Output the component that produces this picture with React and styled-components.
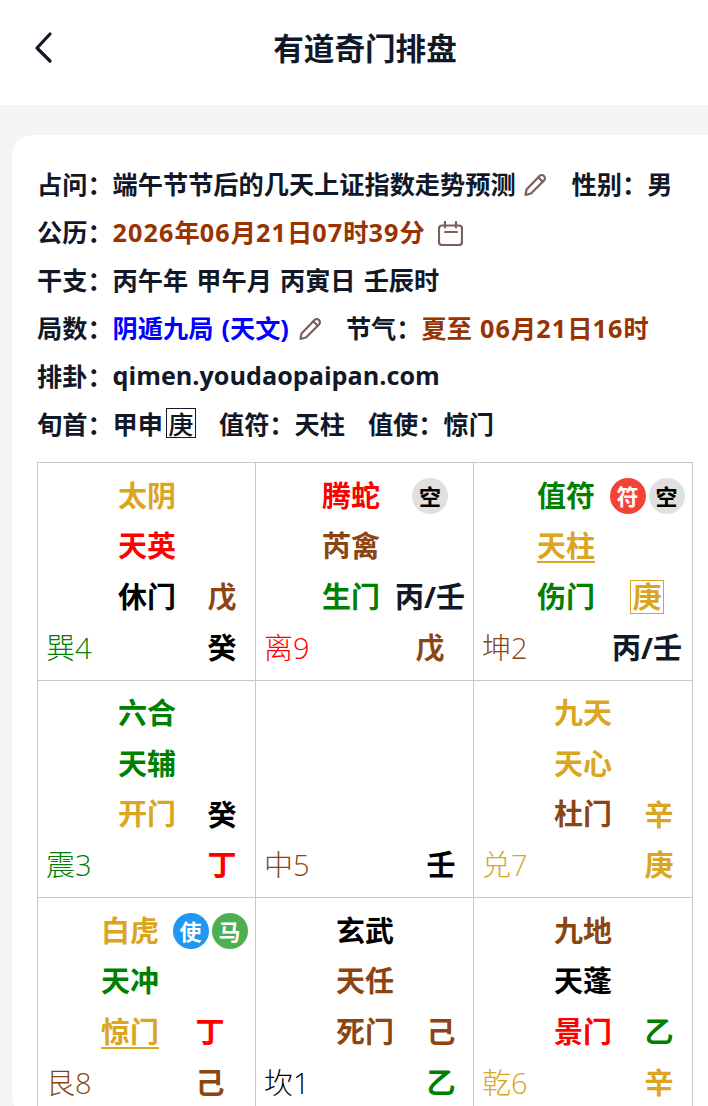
import React from 'react';
import styled, { createGlobalStyle } from 'styled-components';

const GlobalStyle = createGlobalStyle`
    html, body {
        margin: 0;
        padding: 0;
        background: #f3f4f6;
    }
    body {
        font-family: "Open Sans", "Noto Sans CJK SC", sans-serif;
        color: #111827;
    }
`;

const Page = styled.div`
    width: 708px;
    height: 1106px;
    overflow: hidden;
`;

const Header = styled.header`
    height: 105px;
    background: #ffffff;
    position: relative;
    display: flex;
    align-items: center;
    justify-content: center;
`;

const BackButton = styled.button`
    position: absolute;
    left: 26px;
    top: 28px;
    width: 40px;
    height: 40px;
    padding: 0;
    border: 0;
    background: none;
    color: #111827;
`;

const Title = styled.h1`
    margin: 0 0 10px 22px;
    font-size: 30.6px;
    font-weight: 700;
    line-height: 40px;
`;

const Card = styled.main`
    margin: 30px -20px 0 12px;
    padding: 24px 0 0 25px;
    background: #ffffff;
    border-radius: 20px;
`;

const InfoLine = styled.div`
    height: 48px;
    display: flex;
    align-items: center;
    font-size: 25.2px;
    font-weight: 700;
    word-spacing: 1.6px;
    white-space: pre;
`;

const Label = styled.span`
    margin-left: ${(p) => p.$gap || 0}px;
`;

const Value = styled.span`
    color: ${(p) => p.$color || 'inherit'};
`;

const Num = styled.span`
    letter-spacing: 1.1px;
`;

const BoxedChar = styled.span`
    display: inline-flex;
    align-items: center;
    justify-content: center;
    width: 30px;
    height: 30px;
    margin-left: 3px;
    box-sizing: border-box;
    border: 1px solid #111827;
    font-weight: 500;
`;

const EditIcon = styled.svg`
    flex: none;
    width: ${(p) => p.$size}px;
    height: ${(p) => p.$size}px;
    margin: 4px 0 0 ${(p) => p.$gap}px;
    fill: none;
    stroke: #7b5f5b;
    stroke-width: 2.2;
    stroke-linecap: round;
    stroke-linejoin: round;
`;

const Board = styled.section`
    width: 656px;
    margin-top: 15px;
    box-sizing: border-box;
    border-top: 1px solid #c8c8c8;
    border-left: 1px solid #c8c8c8;
    display: grid;
    grid-template-columns: 218px 218px 219px;
    grid-auto-rows: 217.5px;
`;

// inset: where the main column starts, sideAt: where the stem column starts
const Cell = styled.div`
    box-sizing: border-box;
    min-width: 0;
    border-right: 1px solid #c8c8c8;
    border-bottom: 1px solid #c8c8c8;
    padding-top: 8px;
    display: grid;
    grid-template-columns: ${(p) => `${p.$inset}px 58px ${p.$sideAt - p.$inset - 58}px 70px`};
    grid-template-rows: repeat(4, 50.5px);
    font-size: 29px;
    font-weight: 700;
    line-height: 50.5px;
    white-space: nowrap;
`;

const Main = styled.div`
    grid-column: 2;
    grid-row: ${(p) => p.$row};
    color: ${(p) => p.$color};
    display: flex;
    align-items: center;
    & > span {
        line-height: 31px;
        border-bottom: 2px solid ${(p) => (p.$underline ? p.$color : 'transparent')};
    }
`;

const Side = styled.div`
    grid-column: 4;
    grid-row: ${(p) => p.$row};
    color: ${(p) => p.$color};
    display: flex;
    align-items: center;
    justify-content: center;
    gap: 3px;
`;

const Palace = styled.div`
    grid-column: 1 / 3;
    grid-row: 4;
    padding-left: 8px;
    color: ${(p) => p.$color};
    font-weight: 300;
`;

const Badge = styled.span`
    flex: none;
    width: 36px;
    height: 36px;
    border-radius: 50%;
    background: ${(p) => p.$bg};
    color: ${(p) => p.$fg};
    font-size: 22px;
    line-height: 36px;
    text-align: center;
`;

const MarkedStem = styled.span`
    display: block;
    width: 34px;
    height: 34px;
    box-sizing: border-box;
    border: 1px solid currentColor;
    line-height: 32px;
    text-align: center;
`;

const GOLD = '#daa520';
const BROWN = '#8b4513';
const GREEN = '#008000';
const RED = '#ff0000';
const BLACK = '#000000';
const INK = '#111827';
const RUST = '#993300';

const BADGES = {
    kong: { text: '空', bg: '#e0e0e0', fg: '#000000' },
    fu: { text: '符', bg: '#f44336', fg: '#ffffff' },
    shi: { text: '使', bg: '#2196f3', fg: '#ffffff' },
    ma: { text: '马', bg: '#4caf50', fg: '#ffffff' },
};

const CELLS = [
    {
        inset: 80, sideAt: 149,
        god: ['太阴', GOLD], star: ['天英', RED], door: ['休门', BLACK],
        sideDoor: ['戊', BROWN], palace: ['巽4', GREEN], sideBottom: ['癸', BLACK],
    },
    {
        inset: 66, sideAt: 139, badges: ['kong'],
        god: ['腾蛇', RED], star: ['芮禽', BROWN], door: ['生门', GREEN],
        sideDoor: ['丙/壬', INK], palace: ['离9', RED], sideBottom: ['戊', BROWN],
    },
    {
        inset: 63, sideAt: 138, badges: ['fu', 'kong'],
        god: ['值符', GREEN], star: ['天柱', GOLD, true], door: ['伤门', GREEN],
        sideDoor: ['庚', GOLD], marked: true, palace: ['坤2', BROWN], sideBottom: ['丙/壬', INK],
    },
    {
        inset: 80, sideAt: 149,
        god: ['六合', GREEN], star: ['天辅', GREEN], door: ['开门', GOLD],
        sideDoor: ['癸', BLACK], palace: ['震3', GREEN], sideBottom: ['丁', RED],
    },
    {
        inset: 80, sideAt: 150,
        palace: ['中5', BROWN], sideBottom: ['壬', BLACK],
    },
    {
        inset: 80, sideAt: 150,
        god: ['九天', GOLD], star: ['天心', GOLD], door: ['杜门', BROWN],
        sideDoor: ['辛', GOLD], palace: ['兑7', GOLD], sideBottom: ['庚', GOLD],
    },
    {
        inset: 63, sideAt: 137, badges: ['shi', 'ma'],
        god: ['白虎', GOLD], star: ['天冲', GREEN], door: ['惊门', GOLD, true],
        sideDoor: ['丁', RED], palace: ['艮8', BROWN], sideBottom: ['己', BROWN],
    },
    {
        inset: 80, sideAt: 150,
        god: ['玄武', BLACK], star: ['天任', BROWN], door: ['死门', BROWN],
        sideDoor: ['己', BROWN], palace: ['坎1', BLACK], sideBottom: ['乙', GREEN],
    },
    {
        inset: 80, sideAt: 150,
        god: ['九地', BROWN], star: ['天蓬', BLACK], door: ['景门', RED],
        sideDoor: ['乙', GREEN], palace: ['乾6', GOLD], sideBottom: ['辛', GOLD],
    },
];

const Pencil = ({ gap }) => (
    <EditIcon viewBox="0 0 24 24" $size={24} $gap={gap}>
        <path d="M2.5 22 L3.5 16.5 L16.5 3 A3 3 0 0 1 21 7.5 L8 20.5 Z" />
        <path d="M15.5 4.5 L19.5 8.5" />
    </EditIcon>
);

const CalendarMark = () => (
    <EditIcon viewBox="0 0 25 25" $size={25} $gap={13}>
        <rect x="1" y="4.5" width="23" height="19.5" rx="3" />
        <path d="M7 1 V6.5 M18 1 V6.5 M7 11 H19" />
    </EditIcon>
);

const PalaceCell = ({ cell }) => (
    <Cell $inset={cell.inset} $sideAt={cell.sideAt}>
        {cell.god && <Main $row={1} $color={cell.god[1]}><span>{cell.god[0]}</span></Main>}
        {cell.badges && (
            <Side $row={1}>
                {cell.badges.map((key) => (
                    <Badge key={key} $bg={BADGES[key].bg} $fg={BADGES[key].fg}>{BADGES[key].text}</Badge>
                ))}
            </Side>
        )}
        {cell.star && <Main $row={2} $color={cell.star[1]} $underline={cell.star[2]}><span>{cell.star[0]}</span></Main>}
        {cell.door && <Main $row={3} $color={cell.door[1]} $underline={cell.door[2]}><span>{cell.door[0]}</span></Main>}
        {cell.sideDoor && (
            <Side $row={3} $color={cell.sideDoor[1]}>
                {cell.marked ? <MarkedStem>{cell.sideDoor[0]}</MarkedStem> : cell.sideDoor[0]}
            </Side>
        )}
        <Palace $color={cell.palace[1]}>{cell.palace[0]}</Palace>
        <Side $row={4} $color={cell.sideBottom[1]}>{cell.sideBottom[0]}</Side>
    </Cell>
);

export default function App() {
    return (
        <Page>
            <GlobalStyle />
            <Header>
                <BackButton aria-label="返回">
                    <svg width="40" height="40" viewBox="0 0 40 40" fill="none" stroke="currentColor" strokeWidth="3.2" strokeLinecap="round" strokeLinejoin="round">
                        <path d="M24 6 L11 20 L24 33" />
                    </svg>
                </BackButton>
                <Title>有道奇门排盘</Title>
            </Header>
            <Card>
                <InfoLine>
                    <Label>占问：</Label><Value>端午节节后的几天上证指数走势预测</Value>
                    <Pencil gap={7} />
                    <Label $gap={25}>性别：</Label><Value>男</Value>
                </InfoLine>
                <InfoLine>
                    <Label>公历：</Label>
                    <Value $color={RUST}>
                        <Num>2026</Num>年<Num>06</Num>月<Num>21</Num>日<Num>07</Num>时<Num>39</Num>分
                    </Value>
                    <CalendarMark />
                </InfoLine>
                <InfoLine>
                    <Label>干支：</Label><Value>丙午年 甲午月 丙寅日 壬辰时</Value>
                </InfoLine>
                <InfoLine>
                    <Label>局数：</Label><Value $color="#0000ff">阴遁九局 (天文)</Value>
                    <Pencil gap={9} />
                    <Label $gap={24}>节气：</Label>
                    <Value $color={RUST}>
                        夏至 <Num>06</Num>月<Num>21</Num>日<Num>16</Num>时
                    </Value>
                </InfoLine>
                <InfoLine>
                    <Label>排卦：</Label><Value>qimen.youdaopaipan.com</Value>
                </InfoLine>
                <InfoLine>
                    <Label>旬首：</Label><Value>甲申</Value><BoxedChar>庚</BoxedChar>
                    <Label $gap={23}>值符：</Label><Value>天柱</Value>
                    <Label $gap={23}>值使：</Label><Value>惊门</Value>
                </InfoLine>
                <Board>
                    {CELLS.map((cell) => <PalaceCell key={cell.palace[0]} cell={cell} />)}
                </Board>
            </Card>
        </Page>
    );
}
